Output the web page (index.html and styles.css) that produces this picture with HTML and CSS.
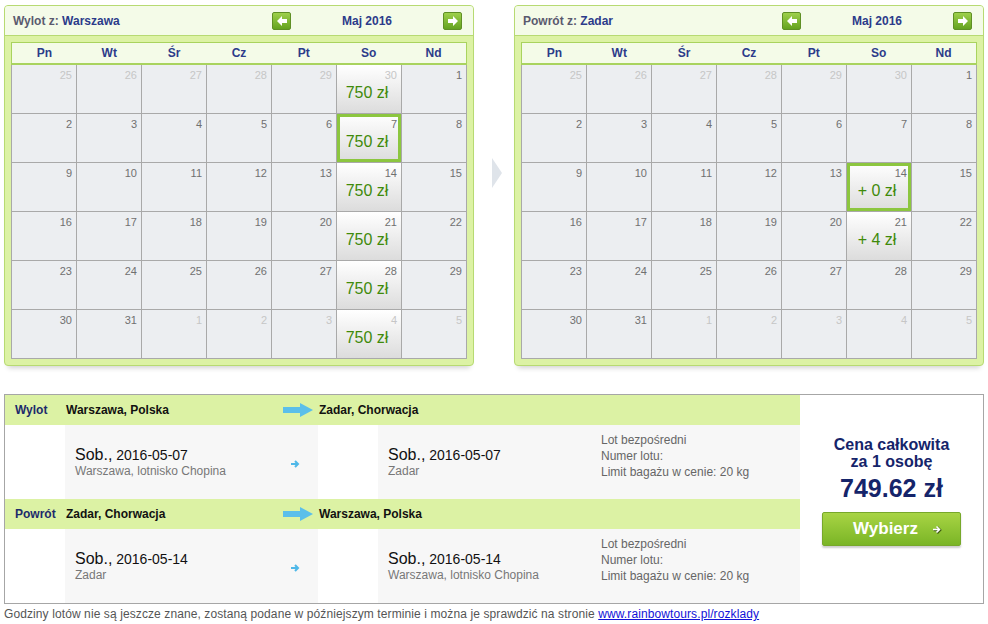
FILE: index.html
```html
<!DOCTYPE html>
<html lang="pl">
<head>
  <meta charset="UTF-8">
  <title>Wybór lotu</title>
  <link rel="stylesheet" href="styles.css">
</head>
<body>
  <div class="calendars">
    <div class="panel">
      <div class="panel-head">
        <span class="title">Wylot z: <b>Warszawa</b></span>
        <div class="month-nav">
          <button class="nav-btn" aria-label="Poprzedni miesiąc">
            <svg width="12" height="12" viewBox="0 0 12 12"><polygon points="1,6 6,1 6,4 11,4 11,8 6,8 6,11" fill="#fff"/></svg>
          </button>
          <span class="month">Maj 2016</span>
          <button class="nav-btn" aria-label="Następny miesiąc">
            <svg width="12" height="12" viewBox="0 0 12 12"><polygon points="11,6 6,1 6,4 1,4 1,8 6,8 6,11" fill="#fff"/></svg>
          </button>
        </div>
      </div>
      <div class="frame">
        <div class="week"><span>Pn</span><span>Wt</span><span>Śr</span><span>Cz</span><span>Pt</span><span>So</span><span>Nd</span></div>
        <div class="days" id="calOut"></div>
      </div>
    </div>

    <div class="sep"><span class="sep-arrow"></span></div>

    <div class="panel">
      <div class="panel-head">
        <span class="title">Powrót z: <b>Zadar</b></span>
        <div class="month-nav">
          <button class="nav-btn" aria-label="Poprzedni miesiąc">
            <svg width="12" height="12" viewBox="0 0 12 12"><polygon points="1,6 6,1 6,4 11,4 11,8 6,8 6,11" fill="#fff"/></svg>
          </button>
          <span class="month">Maj 2016</span>
          <button class="nav-btn" aria-label="Następny miesiąc">
            <svg width="12" height="12" viewBox="0 0 12 12"><polygon points="11,6 6,1 6,4 1,4 1,8 6,8 6,11" fill="#fff"/></svg>
          </button>
        </div>
      </div>
      <div class="frame">
        <div class="week"><span>Pn</span><span>Wt</span><span>Śr</span><span>Cz</span><span>Pt</span><span>So</span><span>Nd</span></div>
        <div class="days" id="calBack"></div>
      </div>
    </div>
  </div>

  <div class="summary">
    <div class="legs">
      <div class="band">
        <span class="band-label">Wylot</span>
        <span class="band-from">Warszawa, Polska</span>
        <svg class="band-arrow" width="30" height="14" viewBox="0 0 30 14"><polygon points="0,4 17,4 17,0 30,7 17,14 17,10 0,10" fill="#5bbfea"/></svg>
        <span>Zadar, Chorwacja</span>
      </div>
      <div class="detail">
        <div class="gap"></div>
        <div class="cell cell-from">
          <div>
            <div class="when"><span class="dow">Sob.,</span> 2016-05-07</div>
            <div class="where">Warszawa, lotnisko Chopina</div>
          </div>
          <svg class="go" width="9" height="8" viewBox="0 0 9 8"><path d="M0 4h7M4 1l3 3-3 3" stroke="#4fb8e8" stroke-width="2" fill="none"/></svg>
        </div>
        <div class="gap"></div>
        <div class="cell cell-to">
          <div class="arrive">
            <div class="when"><span class="dow">Sob.,</span> 2016-05-07</div>
            <div class="where">Zadar</div>
          </div>
          <div class="info">Lot bezpośredni<br>Numer lotu:<br>Limit bagażu w cenie: 20 kg</div>
        </div>
      </div>

      <div class="band">
        <span class="band-label">Powrót</span>
        <span class="band-from">Zadar, Chorwacja</span>
        <svg class="band-arrow" width="30" height="14" viewBox="0 0 30 14"><polygon points="0,4 17,4 17,0 30,7 17,14 17,10 0,10" fill="#5bbfea"/></svg>
        <span>Warszawa, Polska</span>
      </div>
      <div class="detail">
        <div class="gap"></div>
        <div class="cell cell-from">
          <div>
            <div class="when"><span class="dow">Sob.,</span> 2016-05-14</div>
            <div class="where">Zadar</div>
          </div>
          <svg class="go" width="9" height="8" viewBox="0 0 9 8"><path d="M0 4h7M4 1l3 3-3 3" stroke="#4fb8e8" stroke-width="2" fill="none"/></svg>
        </div>
        <div class="gap"></div>
        <div class="cell cell-to">
          <div class="arrive">
            <div class="when"><span class="dow">Sob.,</span> 2016-05-14</div>
            <div class="where">Warszawa, lotnisko Chopina</div>
          </div>
          <div class="info">Lot bezpośredni<br>Numer lotu:<br>Limit bagażu w cenie: 20 kg</div>
        </div>
      </div>
    </div>

    <div class="total">
      <div class="total-label">Cena całkowita<br>za 1 osobę</div>
      <div class="total-price">749.62 zł</div>
      <button class="choose">Wybierz
        <svg width="10" height="9" viewBox="0 0 10 9"><path d="M1 4.5h6M4.5 1.5l3 3-3 3" stroke="#3d5a12" stroke-width="2.4" fill="none" transform="translate(0.6 0.6)"/><path d="M1 4.5h6M4.5 1.5l3 3-3 3" stroke="#fff" stroke-width="1.6" fill="none"/></svg>
      </button>
    </div>
  </div>

  <p class="note">Godziny lotów nie są jeszcze znane, zostaną podane w późniejszym terminie i można je sprawdzić na stronie <a href="#">www.rainbowtours.pl/rozklady</a></p>

  <script>
    // grid starts on Monday 25 April 2016, 6 weeks
    function buildCalendar(id, prices, selected) {
      const box = document.getElementById(id);
      for (let i = 0; i < 42; i++) {
        let day = i - 5;
        let other = false;
        if (day < 1) { day += 30; other = true; }
        else if (day > 31) { day -= 31; other = true; }

        const cell = document.createElement("div");
        cell.className = "day";
        if (other) cell.classList.add("other");
        if (prices[i]) cell.classList.add("priced");
        if (i === selected) cell.classList.add("selected");

        const num = document.createElement("div");
        num.className = "num";
        num.textContent = day;
        cell.appendChild(num);

        if (prices[i]) {
          const price = document.createElement("div");
          price.className = "cost";
          price.textContent = prices[i];
          cell.appendChild(price);
        }
        box.appendChild(cell);
      }
    }

    buildCalendar("calOut", { 5: "750 zł", 12: "750 zł", 19: "750 zł", 26: "750 zł", 33: "750 zł", 40: "750 zł" }, 12);
    buildCalendar("calBack", { 19: "+ 0 zł", 26: "+ 4 zł" }, 19);
  </script>
</body>
</html>
```

FILE: styles.css
```css
body {
  margin: 0;
  padding: 5px 4px;
  width: 980px;
  font-family: "Liberation Sans", Arial, sans-serif;
  font-size: 12px;
  color: #333;
  background: #fff;
}

/* calendars */
.calendars {
  display: flex;
  align-items: flex-start;
}
.panel {
  width: 470px;
  box-sizing: border-box;
  border: 1px solid #b7da72;
  border-radius: 4px;
  background: #dcf2a4;
  box-shadow: 0 6px 5px -4px rgba(0, 0, 0, 0.18);
}
.panel-head {
  height: 29px;
  display: flex;
  align-items: center;
  padding: 0 11px 0 8px;
  background: #f4fbe8;
  border-bottom: 1px solid #b7da72;
  border-radius: 3px 3px 0 0;
}
.title {
  font-weight: bold;
  color: #5a5a6e;
}
.title b {
  color: #2c3b8a;
}
.month-nav {
  margin-left: auto;
  display: flex;
  align-items: center;
  width: 190px;
}
.month {
  flex: 1;
  text-align: center;
  font-weight: bold;
  color: #2c3b8a;
}
.nav-btn {
  width: 19px;
  height: 18px;
  padding: 0;
  border: 1px solid #5f8f25;
  border-radius: 2px;
  background: linear-gradient(#9ed04b, #64a220);
  display: flex;
  align-items: center;
  justify-content: center;
}
.frame {
  padding: 6px;
}
.week {
  display: grid;
  grid-template-columns: repeat(7, 1fr);
  height: 20px;
  line-height: 20px;
  background: #f4fbe8;
  border: 1px solid #a9d35e;
  border-bottom-width: 2px;
  text-align: center;
  font-weight: bold;
  color: #2c3b8a;
}
.days {
  display: grid;
  grid-template-columns: repeat(7, 64px);
  grid-auto-rows: 48px;
  gap: 1px;
  background: #a9a9a9;
  border: 1px solid #a9a9a9;
  border-top: 0;
}
.day {
  background: #eceef1;
  padding: 4px 4px 0 0;
  text-align: right;
  font-size: 11px;
  line-height: 13px;
  color: #707070;
}
.day.other {
  color: #c6c6c6;
}
.day.priced {
  background: linear-gradient(#ffffff, #dcdcdc);
}
.day.selected {
  box-shadow: inset 0 0 0 3px #8cc63f;
}
.cost {
  margin-top: 1px;
  text-align: center;
  font-size: 16px;
  line-height: 20px;
  color: #3f8a0a;
}
.sep {
  width: 41px;
}
.sep-arrow {
  display: block;
  width: 0;
  height: 0;
  margin: 153px 0 0 18px;
  border-left: 10px solid #dfe4ea;
  border-top: 15px solid transparent;
  border-bottom: 15px solid transparent;
}

/* summary */
.summary {
  display: flex;
  margin-top: 28px;
  border: 1px solid #a6a6a6;
}
.legs {
  width: 795px;
}
.band {
  display: flex;
  align-items: center;
  height: 30px;
  background: #dcf2a4;
  font-weight: bold;
  color: #111;
}
.band-label {
  width: 51px;
  padding-left: 10px;
  color: #1d2b6b;
}
.band-from {
  width: 217px;
}
.band-arrow {
  margin-right: 6px;
}
.detail {
  display: flex;
  height: 74px;
}
.gap {
  width: 60px;
  background: #fff;
}
.cell {
  display: flex;
  background: #f7f7f7;
}
.cell-from {
  width: 253px;
  box-sizing: border-box;
  padding: 21px 18px 0 10px;
}
.cell-from .go {
  margin: 14px 0 0 auto;
}
.cell-to {
  flex: 1;
}
.arrive {
  width: 213px;
  box-sizing: border-box;
  padding: 21px 0 0 10px;
}
.when {
  font-size: 14px;
  line-height: 18px;
  color: #111;
}
.dow {
  font-size: 16px;
}
.where {
  line-height: 14px;
  color: #777;
}
.info {
  padding: 7px 0 0 10px;
  line-height: 16px;
  color: #666;
}
.total {
  flex: 1;
  display: flex;
  flex-direction: column;
  align-items: center;
  padding-top: 41px;
  color: #15246a;
  font-weight: bold;
  text-align: center;
}
.total-label {
  font-size: 16px;
  line-height: 17px;
}
.total-price {
  margin-top: 3px;
  font-size: 25px;
  line-height: 30px;
}
.choose {
  margin-top: 9px;
  width: 139px;
  height: 34px;
  display: flex;
  align-items: center;
  justify-content: center;
  gap: 14px;
  padding: 0 0 0 12px;
  border: 1px solid #77a82a;
  border-radius: 2px;
  background: linear-gradient(#a8d444, #7ab526);
  box-shadow: 0 2px 2px rgba(0, 0, 0, 0.2);
  font-family: inherit;
  font-size: 17px;
  font-weight: bold;
  color: #fff;
}
.note {
  margin: 2px 0 0;
  line-height: 17px;
  letter-spacing: 0.1px;
  color: #555;
}
.note a {
  color: #1212d8;
}
```
